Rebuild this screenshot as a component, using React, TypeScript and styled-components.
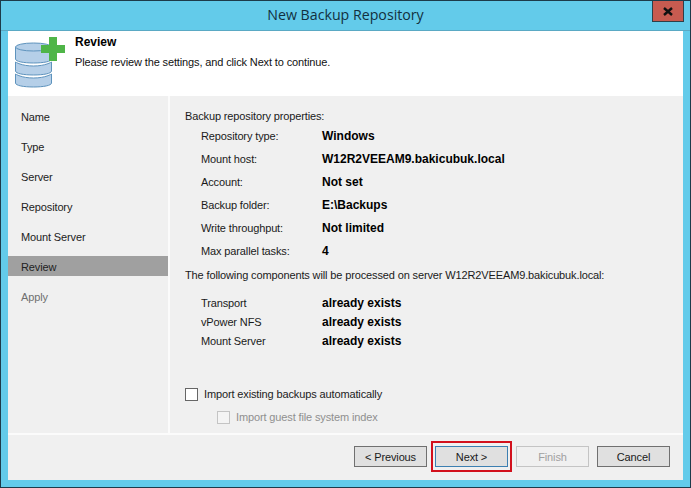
import React from "react";
import styled, { createGlobalStyle } from "styled-components";

const GlobalStyle = createGlobalStyle`
  html, body {
    margin: 0;
    padding: 0;
    background: #63cbea;
  }
`;

const Window = styled.div`
  width: 691px;
  height: 488px;
  box-sizing: border-box;
  display: flex;
  flex-direction: column;
  position: relative;
  overflow: hidden;
  background: #63cbea;
  border: 1px solid #1d3b4a;
  font-family: "Liberation Sans", Arial, sans-serif;
  font-size: 11px;
  letter-spacing: -0.13px;
  color: #1a1a1a;
`;

const TitleBar = styled.div`
  height: 30px;
  flex: none;
  box-sizing: border-box;
  padding-bottom: 2px;
  display: flex;
  align-items: center;
  justify-content: center;
  font-family: "Open Sans", sans-serif;
  font-size: 14.2px;
  letter-spacing: 0;
  color: #12303e;
  border-bottom: 1px solid #5aa9c4;
`;

const CloseButton = styled.div`
  position: absolute;
  top: -1px;
  right: 6px;
  width: 32px;
  height: 22px;
  box-sizing: border-box;
  display: flex;
  align-items: center;
  justify-content: center;
  background: #c75b50;
  border: 1px solid #2f3f48;
`;

const Client = styled.div`
  flex: none;
  width: 675px;
  height: 449px;
  margin-left: 7px;
  display: flex;
  flex-direction: column;
  background: #f0f0f0;
`;

const Header = styled.div`
  height: 65px;
  flex: none;
  box-sizing: border-box;
  display: flex;
  background: #fff;
  padding: 6px 0 0 7px;
`;

const HeaderIcon = styled.svg`
  width: 52px;
  height: 54px;
  flex: none;
`;

const HeaderText = styled.div`
  margin-left: 8px;
  display: flex;
  flex-direction: column;
`;

const HeaderTitle = styled.div`
  font-weight: bold;
  font-size: 12px;
  letter-spacing: 0;
  line-height: 14px;
  color: #000;
  margin-top: -2px;
`;

const HeaderSubtitle = styled.div`
  line-height: 14px;
  margin-top: 6px;
  color: #111;
`;

const Body = styled.div`
  flex: 1;
  display: flex;
  min-height: 0;
  border-bottom: 2px solid #fbfbfb;
`;

const Sidebar = styled.div`
  width: 162px;
  flex: none;
  box-sizing: border-box;
  padding-top: 10px;
  display: flex;
  flex-direction: column;
  gap: 10px;
  border-right: 2px solid #fbfbfb;
`;

const NavItem = styled.div<{ $active?: boolean; $disabled?: boolean }>`
  height: 20px;
  box-sizing: border-box;
  padding: 1px 0 0 13px;
  line-height: 20px;
  background: ${(p) => (p.$active ? "#a0a0a0" : "transparent")};
  color: ${(p) => (p.$disabled ? "#6f6f6f" : "#222")};
`;

const Content = styled.div`
  flex: 1;
  padding: 13px 0 0 15px;
  display: flex;
  flex-direction: column;
`;

const Line = styled.div`
  height: 14px;
  line-height: 14px;
`;

const PropertyList = styled.div<{ $gap: number; $top: number }>`
  display: flex;
  flex-direction: column;
  gap: ${(p) => p.$gap}px;
  margin: ${(p) => p.$top}px 0 0 16px;
`;

const PropertyRow = styled.div`
  display: flex;
  height: 14px;
  line-height: 14px;
`;

const PropertyLabel = styled.div`
  width: 121px;
  flex: none;
`;

const PropertyValue = styled.div`
  font-weight: bold;
  font-size: 12px;
  letter-spacing: 0;
  color: #000;
`;

const Notice = styled(Line)`
  margin-top: 10px;
`;

const CheckRow = styled.div<{ $indent?: number; $top: number; $disabled?: boolean }>`
  display: flex;
  align-items: center;
  height: 14px;
  margin-top: ${(p) => p.$top}px;
  margin-left: ${(p) => p.$indent ?? 0}px;
  color: ${(p) => (p.$disabled ? "#8f8f8f" : "#222")};
`;

const CheckBox = styled.span<{ $disabled?: boolean }>`
  width: 13px;
  height: 13px;
  box-sizing: border-box;
  flex: none;
  margin-right: 6px;
  background: ${(p) => (p.$disabled ? "#f4f4f4" : "#fff")};
  border: 1px solid ${(p) => (p.$disabled ? "#c4c4c4" : "#666")};
`;

const Footer = styled.div`
  height: 45px;
  flex: none;
  box-sizing: border-box;
  display: flex;
  justify-content: flex-end;
  gap: 8px;
  padding: 11px 13px 0 0;
`;

const Button = styled.button<{ $focused?: boolean }>`
  width: 73px;
  height: 21px;
  box-sizing: border-box;
  padding: 0;
  font-family: inherit;
  font-size: 11px;
  letter-spacing: inherit;
  color: #1a1a1a;
  background: #e0e0e0;
  border: 1px solid ${(p) => (p.$focused ? "#3c7fb1" : "#707070")};

  &:disabled {
    color: #a0a0a0;
    background: #f0f0f0;
    border-color: #c4c4c4;
  }
`;

const MarkedButton = styled(Button)`
  position: relative;

  &::after {
    content: "";
    position: absolute;
    inset: -6px -5px;
    border: 2px solid #d2101c;
  }
`;

const steps = ["Name", "Type", "Server", "Repository", "Mount Server", "Review", "Apply"];

const properties = [
  ["Repository type:", "Windows"],
  ["Mount host:", "W12R2VEEAM9.bakicubuk.local"],
  ["Account:", "Not set"],
  ["Backup folder:", "E:\\Backups"],
  ["Write throughput:", "Not limited"],
  ["Max parallel tasks:", "4"],
];

const components = ["Transport", "vPower NFS", "Mount Server"];

const App = () => {
  return (
    <Window>
      <GlobalStyle />
      <TitleBar>New Backup Repository</TitleBar>
      <CloseButton>
        <svg width="10" height="9" viewBox="0 0 10 9">
          <path d="M1 1 L9 8 M9 1 L1 8" stroke="#111" strokeWidth="2.4" fill="none" />
        </svg>
      </CloseButton>
      <Client>
        <Header>
          <HeaderIcon viewBox="0 0 52 54">
            <g fill="#b5cfe8" stroke="#5e93bd" strokeWidth="1">
              <path d="M0.5 37 c0 0 6 4 18 4 s18 -4 18 -4 v9 c0 2.5 -8 4 -18 4 s-18 -1.5 -18 -4 z" />
              <path d="M0.5 25 c0 0 6 4 18 4 s18 -4 18 -4 v9 c0 2.5 -8 4 -18 4 s-18 -1.5 -18 -4 z" />
              <path d="M0.5 10 v12 c0 2.5 8 4 18 4 s18 -1.5 18 -4 v-12 z" />
              <ellipse cx="18.5" cy="10" rx="18" ry="4" />
            </g>
            <path d="M34 0 h8 v8 h8 v8 h-8 v8 h-8 v-8 h-8 v-8 h8 z" fill="#4fb548" />
          </HeaderIcon>
          <HeaderText>
            <HeaderTitle>Review</HeaderTitle>
            <HeaderSubtitle>Please review the settings, and click Next to continue.</HeaderSubtitle>
          </HeaderText>
        </Header>
        <Body>
          <Sidebar>
            {steps.map((step) => (
              <NavItem key={step} $active={step === "Review"} $disabled={step === "Apply"}>
                {step}
              </NavItem>
            ))}
          </Sidebar>
          <Content>
            <Line>Backup repository properties:</Line>
            <PropertyList $gap={9} $top={6}>
              {properties.map(([label, value]) => (
                <PropertyRow key={label}>
                  <PropertyLabel>{label}</PropertyLabel>
                  <PropertyValue>{value}</PropertyValue>
                </PropertyRow>
              ))}
            </PropertyList>
            <Notice>The following components will be processed on server W12R2VEEAM9.bakicubuk.local:</Notice>
            <PropertyList $gap={5} $top={14}>
              {components.map((name) => (
                <PropertyRow key={name}>
                  <PropertyLabel>{name}</PropertyLabel>
                  <PropertyValue>already exists</PropertyValue>
                </PropertyRow>
              ))}
            </PropertyList>
            <CheckRow $top={39}>
              <CheckBox />
              Import existing backups automatically
            </CheckRow>
            <CheckRow $top={9} $indent={32} $disabled>
              <CheckBox $disabled />
              Import guest file system index
            </CheckRow>
          </Content>
        </Body>
        <Footer>
          <Button>&lt; Previous</Button>
          <MarkedButton $focused>Next &gt;</MarkedButton>
          <Button disabled>Finish</Button>
          <Button>Cancel</Button>
        </Footer>
      </Client>
    </Window>
  );
};

export default App;
